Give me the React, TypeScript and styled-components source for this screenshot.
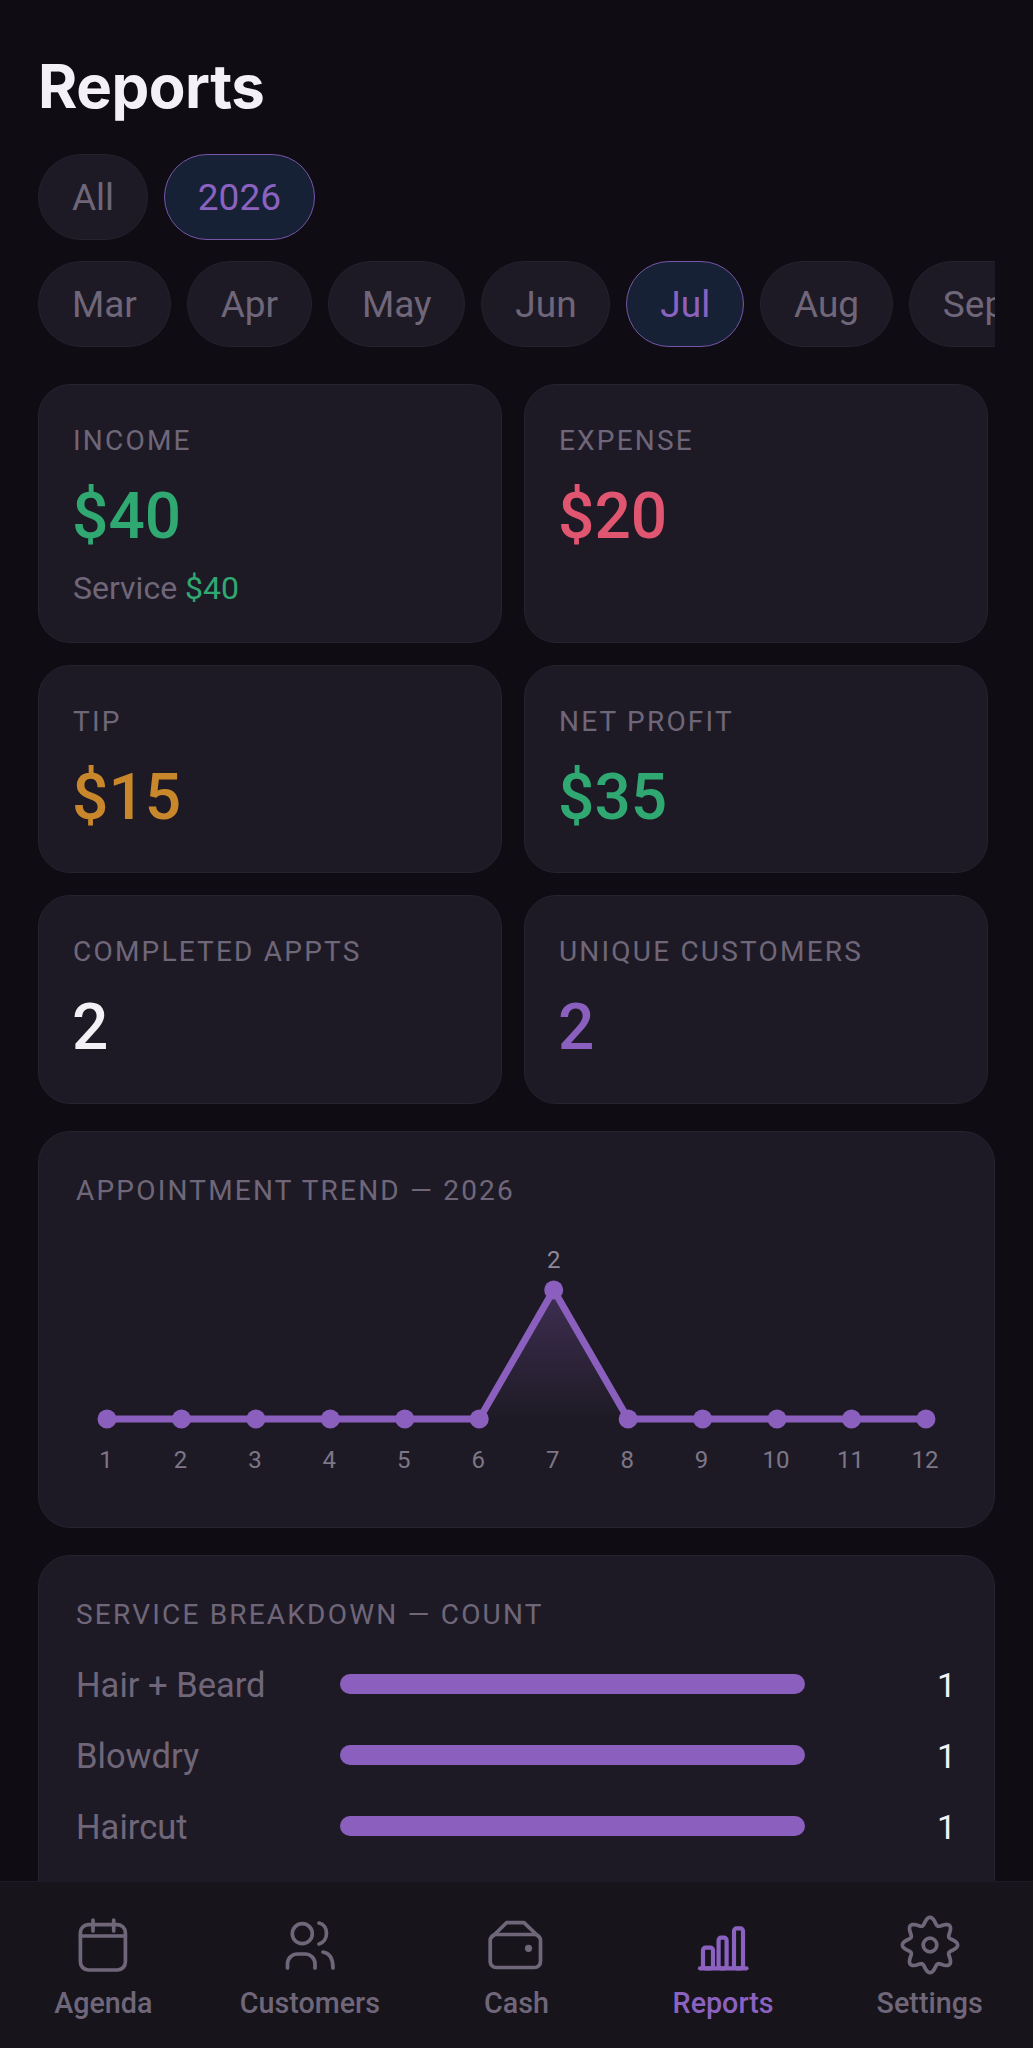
import React from "react";
import styled, { createGlobalStyle } from "styled-components";

const Global = createGlobalStyle`
  html, body { margin: 0; padding: 0; background: #0f0c14; }
  * { box-sizing: border-box; }
  #root { height: 2048px; }
`;

const Page = styled.div`
  width: 1033px;
  height: 2048px;
  display: flex;
  flex-direction: column;
  overflow: hidden;
  background: #0f0c14;
  font-family: Roboto, "Liberation Sans", sans-serif;
`;
const Content = styled.main`
  flex: 1;
  min-height: 0;
  overflow: hidden;
  padding: 50px 38px 0;
`;
const Title = styled.h1`
  margin: 0 0 32px;
  font-family: Inter, Roboto, sans-serif;
  font-size: 60px;
  line-height: 72px;
  font-weight: 700;
  letter-spacing: -0.5px;
  color: #f3f1f6;
`;
const ChipRow = styled.div`
  display: flex;
  gap: 16px;
  width: 957px;
  overflow: hidden;
  margin-bottom: 21px;
`;
const Chip = styled.div<{ $active?: boolean }>`
  flex: none;
  height: 86px;
  padding: 0 32.9px;
  display: flex;
  align-items: center;
  border-radius: 43px;
  font-size: 37px;
  color: ${(p) => (p.$active ? "#8b62c0" : "#6f6779")};
  background: ${(p) => (p.$active ? "#172135" : "#1e1a25")};
  border: 1.5px solid ${(p) => (p.$active ? "#7656a8" : "#25212d")};
`;
const Stats = styled.div`
  display: grid;
  grid-template-columns: 464px 464px;
  column-gap: 22px;
  row-gap: 22px;
  margin-top: 37px;
`;
const StatCard = styled.section<{ $height: number }>`
  height: ${(p) => p.$height}px;
  padding: 40px 34px 0;
  border-radius: 32px;
  background: #1e1a25;
  border: 1.5px solid #26222e;
`;
const StatLabel = styled.div`
  font-size: 28px;
  line-height: 32px;
  letter-spacing: 2.2px;
  color: #6f6779;
`;
const StatValue = styled.div<{ $color: string }>`
  margin-top: 24px;
  margin-left: -1px;
  font-size: 64px;
  line-height: 72px;
  font-weight: 500;
  color: ${(p) => p.$color};
`;
const StatNote = styled.div`
  margin-top: 17px;
  font-size: 32px;
  line-height: 36px;
  color: #6f6779;
`;
const Green = styled.span`
  color: #2fa872;
`;
const Panel = styled.section<{ $height: number }>`
  width: 957px;
  height: ${(p) => p.$height}px;
  margin-top: 27px;
  padding: 43px 37px 0;
  border-radius: 32px;
  background: #1e1a25;
  border: 1.5px solid #26222e;
`;
const PanelTitle = styled.div`
  font-size: 28px;
  line-height: 32px;
  letter-spacing: 2.2px;
  color: #6f6779;
`;
const Chart = styled.svg`
  display: block;
  margin: 0 0 0 -37px;
  width: 957px;
  height: 300px;
`;
const Bars = styled.div`
  display: flex;
  flex-direction: column;
  gap: 31px;
  margin-top: 33px;
`;
const BarRow = styled.div`
  display: flex;
  align-items: center;
  height: 40px;
`;
const BarLabel = styled.div`
  width: 264px;
  flex: none;
  padding-top: 2px;
  font-size: 34.5px;
  color: #6f6779;
`;
const BarTrack = styled.div`
  width: 465px;
  height: 20px;
  flex: none;
  border-radius: 10px;
  background: #8a5fbe;
`;
const BarCount = styled.div`
  flex: 1;
  text-align: right;
  font-size: 34px;
  padding: 2px 1px 0 0;
  color: #f3f1f6;
`;
const Nav = styled.nav`
  flex: none;
  height: 167px;
  display: flex;
  background: #17141c;
  border-top: 1.5px solid #1f1b26;
`;
const NavItem = styled.div<{ $active?: boolean }>`
  flex: 1;
  display: flex;
  flex-direction: column;
  align-items: center;
  padding-top: 31px;
  color: ${(p) => (p.$active ? "#8b62c0" : "#6f6779")};
`;
const NavLabel = styled.div`
  margin-top: 9px;
  font-size: 28.7px;
  line-height: 34px;
  font-weight: 500;
`;
const Icon = styled.svg<{ $bold?: boolean }>`
  width: 64px;
  height: 64px;
  fill: none;
  stroke: currentColor;
  stroke-width: ${(p) => (p.$bold ? 4.2 : 3.7)};
  stroke-linecap: round;
  stroke-linejoin: round;
`;

const xs = Array.from({ length: 12 }, (_, i) => 68 + i * 74.45);
const base = 212;
const peak = 83;
const ys = xs.map((_, i) => (i === 6 ? peak : base));

const gearPath = (() => {
  const pts: string[] = [];
  for (let i = 0; i < 192; i++) {
    const t = (i / 192) * Math.PI * 2;
    const r = 24 + 3.6 * Math.cos(8 * t);
    pts.push(`${(32 + r * Math.sin(t)).toFixed(2)} ${(32 - r * Math.cos(t)).toFixed(2)}`);
  }
  return `M${pts.join("L")}Z`;
})();

const TrendChart = () => (
  <Chart viewBox="0 0 957 300">
    <defs>
      <linearGradient id="fade" x1="0" y1="0" x2="0" y2="1">
        <stop offset="0" stopColor="#8a5fbe" stopOpacity="0.3" />
        <stop offset="1" stopColor="#8a5fbe" stopOpacity="0" />
      </linearGradient>
    </defs>
    <path d={`M${xs[5]} ${base} L${xs[6]} ${peak} L${xs[7]} ${base} Z`} fill="url(#fade)" />
    <polyline points={xs.map((x, i) => `${x},${ys[i]}`).join(" ")} fill="none" stroke="#8a5fbe" strokeWidth="7" strokeLinejoin="round" />
    {xs.map((x, i) => (
      <circle key={i} cx={x} cy={ys[i]} r="9.5" fill="#8a5fbe" />
    ))}
    <text x={xs[6]} y={peak - 22} textAnchor="middle" fontSize="24" fill="#8f8899">2</text>
    {xs.map((x, i) => (
      <text key={i} x={x - 1} y={base + 49} textAnchor="middle" fontSize="24" fill="#7d7687">{i + 1}</text>
    ))}
  </Chart>
);

const stats = [
  { label: "INCOME", value: "$40", color: "#2fa872", height: 259, note: true },
  { label: "EXPENSE", value: "$20", color: "#e0556f", height: 259 },
  { label: "TIP", value: "$15", color: "#c9872b", height: 208 },
  { label: "NET PROFIT", value: "$35", color: "#2fa872", height: 208 },
  { label: "COMPLETED APPTS", value: "2", color: "#f3f1f6", height: 209 },
  { label: "UNIQUE CUSTOMERS", value: "2", color: "#8a5fbe", height: 209 },
];

const months = ["Mar", "Apr", "May", "Jun", "Jul", "Aug", "Sep"];
const services = ["Hair + Beard", "Blowdry", "Haircut"];

export default function App() {
  return (
    <Page>
      <Global />
      <Content>
        <Title>Reports</Title>
        <ChipRow>
          <Chip>All</Chip>
          <Chip $active>2026</Chip>
        </ChipRow>
        <ChipRow>
          {months.map((m) => (
            <Chip key={m} $active={m === "Jul"}>{m}</Chip>
          ))}
        </ChipRow>
        <Stats>
          {stats.map((s) => (
            <StatCard key={s.label} $height={s.height}>
              <StatLabel>{s.label}</StatLabel>
              <StatValue $color={s.color}>{s.value}</StatValue>
              {s.note && (
                <StatNote>
                  Service <Green>$40</Green>
                </StatNote>
              )}
            </StatCard>
          ))}
        </Stats>
        <Panel $height={397}>
          <PanelTitle>APPOINTMENT TREND — 2026</PanelTitle>
          <TrendChart />
        </Panel>
        <Panel $height={400}>
          <PanelTitle>SERVICE BREAKDOWN — COUNT</PanelTitle>
          <Bars>
            {services.map((s) => (
              <BarRow key={s}>
                <BarLabel>{s}</BarLabel>
                <BarTrack />
                <BarCount>1</BarCount>
              </BarRow>
            ))}
          </Bars>
        </Panel>
      </Content>
      <Nav>
        <NavItem>
          <Icon viewBox="0 0 64 64">
            <path d="M22 7v11M42.7 7v11" />
            <rect x="9.4" y="11.7" width="45" height="45.3" rx="8" />
            <path d="M9.4 23h45" />
          </Icon>
          <NavLabel>Agenda</NavLabel>
        </NavItem>
        <NavItem>
          <Icon viewBox="0 0 64 64">
            <circle cx="24.3" cy="20.7" r="10" />
            <path d="M41 10C51 12 51 28 41 31" />
            <path d="M9.5 55V51A10 10 0 0 1 19.5 41H27A10 10 0 0 1 37 51V55" />
            <path d="M45 39C51 40 55 45 55 55" />
          </Icon>
          <NavLabel>Customers</NavLabel>
        </NavItem>
        <NavItem>
          <Icon viewBox="0 0 64 64">
            <path d="M8 24L22.5 9.7H40L55 24" />
            <rect x="6.2" y="21.5" width="50.3" height="33" rx="6" />
            <circle cx="44.5" cy="35.3" r="3.6" fill="currentColor" stroke="none" />
          </Icon>
          <NavLabel>Cash</NavLabel>
        </NavItem>
        <NavItem $active>
          <Icon viewBox="0 0 64 64" $bold>
            <rect x="12" y="34.7" width="10" height="20.6" rx="2.5" />
            <rect x="27.6" y="24.7" width="8" height="30.6" rx="2.5" />
            <rect x="43" y="15.4" width="9" height="39.9" rx="2.5" />
            <path d="M9 55.3h46.5" />
          </Icon>
          <NavLabel>Reports</NavLabel>
        </NavItem>
        <NavItem>
          <Icon viewBox="0 0 64 64">
            <path d={gearPath} />
            <circle cx="32" cy="32" r="6.8" />
          </Icon>
          <NavLabel>Settings</NavLabel>
        </NavItem>
      </Nav>
    </Page>
  );
}
